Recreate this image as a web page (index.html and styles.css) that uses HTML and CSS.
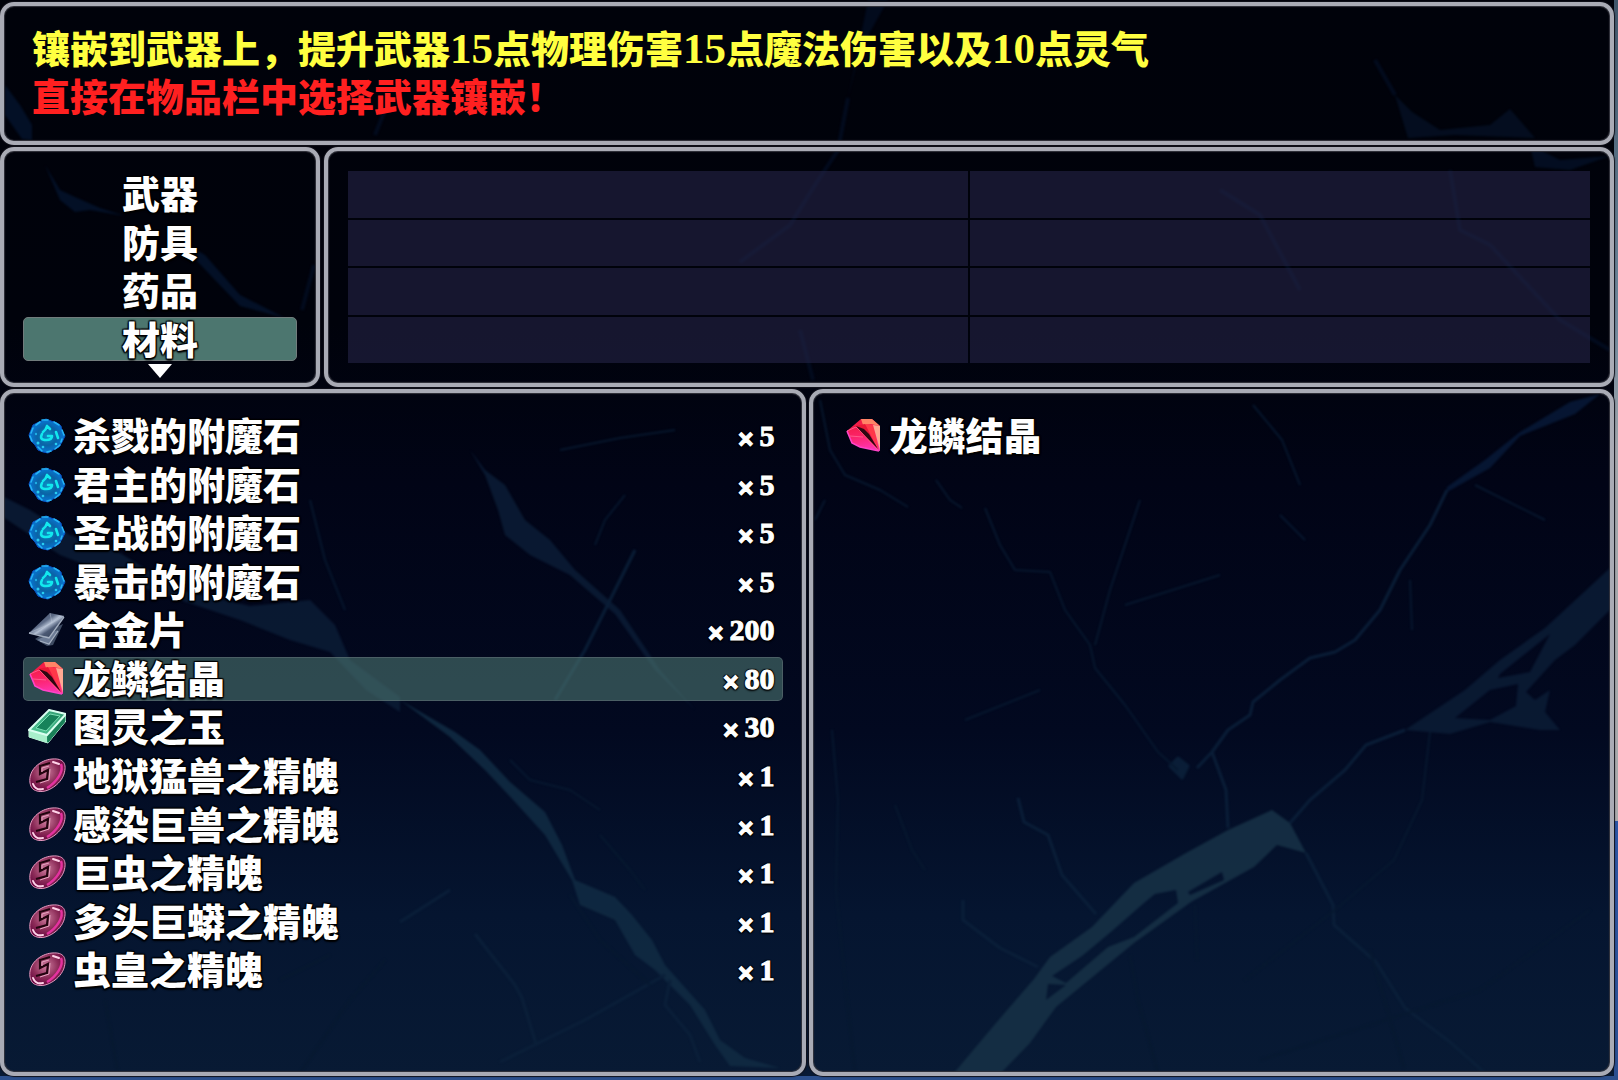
FILE: index.html
```html
<!DOCTYPE html>
<html lang="zh-CN">
<head>
<meta charset="utf-8">
<meta name="viewport" content="width=device-width, initial-scale=1">
<title>物品栏</title>
<link rel="stylesheet" href="styles.css">
</head>
<body>
<svg class="sprites" aria-hidden="true">
  <defs>
    <radialGradient id="g-stone"><stop offset="0" stop-color="#0b8fc4"/><stop offset=".55" stop-color="#0a63a6"/><stop offset="1" stop-color="#0878d8"/></radialGradient>
    <linearGradient id="g-metal" x1="0" y1="0" x2="1" y2="1"><stop offset="0" stop-color="#35425c"/><stop offset=".4" stop-color="#5d6b86"/><stop offset=".52" stop-color="#b4c0d4"/><stop offset=".65" stop-color="#4b5974"/><stop offset="1" stop-color="#28344a"/></linearGradient>
    <linearGradient id="g-gem" x1=".3" y1="0" x2=".5" y2="1"><stop offset="0" stop-color="#f01a3c"/><stop offset=".5" stop-color="#fb2366"/><stop offset="1" stop-color="#ff35b4"/></linearGradient>
    <linearGradient id="g-jade" x1="1" y1="0" x2="0" y2="1"><stop offset="0" stop-color="#2f9a70"/><stop offset="1" stop-color="#4fc795"/></linearGradient>
    <radialGradient id="g-soul" cx=".45" cy=".4" r=".6"><stop offset="0" stop-color="#cf7c9f"/><stop offset=".6" stop-color="#8c2c58"/><stop offset="1" stop-color="#6a0840"/></radialGradient>
    <symbol id="stone" viewBox="0 0 38 38">
      <path d="M18 2l5 2 6 2 4 3 1 5 3 5-3 6-3 5-6 3-5 3-5-1-5-2-3-5-4-4-2-6 2-5 2-5 6-3z" fill="url(#g-stone)" stroke="#0a4fc0"/>
      <path d="M14 3l6 0M8 8l4-3M3 16l2-5M4 24l-2-5M26 5l5 3M34 13l2 5M32 28l-5 4M10 30l4 4M19 35l4-1M34 22l-1 3" stroke="#25b4f4" stroke-width="1.6" stroke-linecap="round" fill="none"/>
      <path d="M19 9q-1 4-4 6M19 9l3 3M14 17q-3 6 4 6 6 0 6-4l-4 0M28 15l2 6" stroke="#12e8ee" stroke-width="2.6" stroke-linejoin="round" stroke-linecap="round" fill="none"/>
      <circle cx="10" cy="26" r="1.5" fill="#27cdf0"/><circle cx="15" cy="30" r="1.3" fill="#27cdf0"/><circle cx="28" cy="27" r="1.3" fill="#27cdf0"/><circle cx="8" cy="17" r="1.2" fill="#1eaee4"/>
    </symbol>
    <symbol id="alloy" viewBox="0 0 38 38">
      <path d="M7 28l14-9 14-6-10 21-6 1z" fill="#3e4b62"/>
      <path d="M9 29l16-8 5-2-9 15z" fill="#6c7b95"/>
      <path d="M22 2l14 3-14 21L1 22z" fill="url(#g-metal)"/>
      <path d="M22 2l2 10L1 22M24 12L36 5" stroke="#c1cbda" stroke-width="1" opacity=".4" fill="none"/>
      <path d="M1 22l20 5L36 6M12 30l9 3 9-13" stroke="#a4afc0" stroke-width="1.3" fill="none"/>
    </symbol>
    <symbol id="gem" viewBox="0 0 38 38">
      <path d="M16 2l11 0 8 7v25l-20-4-8-4L2 14z" fill="url(#g-gem)"/>
      <path d="M16 2h11l8 7-9-2-8 1z" fill="#ff8466"/>
      <path d="M20 7l8 1 6 25z" fill="#ff3848"/>
      <path d="M28 8l7 1v24z" fill="#ffa892"/>
      <path d="M9 9l11-2 5 10 8 15-12-11z" fill="#e81836"/>
      <path d="M11 9l8 3 5 5 9 15-12-12z" fill="#2e0712"/>
      <path d="M2 14l9-4 22 23M5 19l13 1" stroke="#ff5a8c" stroke-width="1" fill="none"/>
      <path d="M2 14l5 12 8 4 19 4" stroke="#ff44c8" stroke-width="1.6" fill="none"/>
    </symbol>
    <symbol id="jade" viewBox="0 0 38 38">
      <path d="M21 2l17 4v7L20 35 1 29v-7z" fill="#23986a" stroke="#d4fbe8"/>
      <path d="M1 22l18 5v8L1 29z" fill="#a8efcb"/>
      <path d="M19 27L37 6v8L20 35z" fill="#198158"/>
      <path d="M21 2l17 4-19 21-18-5z" fill="url(#g-jade)" stroke="#d9fff0" stroke-width="2"/>
      <path d="M22 6l10 2-14 15-10-3z" fill="#17835a" stroke="#7ce0b4"/>
    </symbol>
    <symbol id="soul" viewBox="0 0 38 38">
      <path d="M2 26C0 13 12 3 24 2s15 5 12 15S19 37 9 34c-4-1-6-3-7-8z" fill="url(#g-soul)" stroke="#e69bc0"/>
      <path d="M33 7c3 7-4 18-14 24" stroke="#e4329f" stroke-width="2.5" fill="none"/>
      <path d="M5 27c2 5 6 6 10 5M25 5l6 2" stroke="#ffd2e8" stroke-width="2" stroke-linecap="round" fill="none"/>
      <path d="M22 6l-10 3 0 8 8-4-1 9-11 3" stroke="#22040f" stroke-width="2.2" fill="none"/>
      <path d="M21 9l-7 2 0 4M22 12l-1 11-9 3" stroke="#e4a6c0" stroke-width="1" fill="none"/>
    </symbol>
  </defs>
</svg>

<div class="game">
  <svg class="marble" viewBox="0 0 1614 1076" preserveAspectRatio="none" aria-hidden="true">
    <g class="veins">
    <g fill="#0a1b34">
      <path d="M0 495L30 510 70 535 120 553 180 590 250 606 310 600 335 625 350 660 400 697 400 712 366 690 330 652 290 640 240 620 150 590 60 555 0 515z"/>
      <path d="M470 450L485 470 505 485 525 520 550 540 575 570 620 610 660 670 695 710 655 670 615 614 570 575 530 555 505 535 498 510 485 475z"/>
      <path d="M1610 568L1570 605 1545 628 1500 660 1465 690 1405 730 1450 734 1490 722 1540 730 1560 730 1545 712 1550 690 1535 700 1526 692 1555 660 1575 645 1610 610zM1500 674L1550 634 1530 672 1498 678zM1455 718L1490 690 1518 684 1516 706 1490 720z" fill-rule="evenodd"/>
      <path d="M1600 394L1575 414 1520 436 1490 468 1447 492 1447 487 1485 460 1520 432 1570 402z" fill="#071836"/>
      <path d="M5 85L20 105 32 125 32 140 22 139 5 115z" fill="#04122a"/>
      <path d="M45 165L60 190 75 197 100 208 125 216 90 210 75 212 60 200zM175 238L205 255 240 295 285 318 240 306 215 280z" fill="#04122a"/>
      <path d="M1395 95L1412 112 1440 130 1490 125 1510 109 1535 138 1455 135 1408 138z" fill="#050f22"/>
      <path d="M1530 145L1560 160 1610 156 1570 170 1535 167z" fill="#040f24"/>
      <path d="M888 0L860 50 848 98 856 60 868 0z" fill="#030c20"/>
    </g>
    <path fill="#102a42" d="M400 700L455 732 480 750 510 782 545 812 562 845 575 880 615 897 632 915 652 940 665 965 705 1010 720 1040 745 1058 780 1068 730 1066 715 1045 690 1005 655 970 635 955 615 920 580 905 572 880 545 835 515 802 485 770 450 737z"/>
    <path fill="#163045" fill-rule="evenodd" d="M954 1073L996 1023 1034 979 1050 957 1092 927 1134 883 1186 853 1228 830 1272 810 1290 823 1306 853 1277 845 1254 867 1191 902 1134 943 1056 1007 1030 1043 1001 1073zM1188 892L1222 872 1224 880 1190 895zM1155 894L1176 890 1178 903 1134 937 1108 947 1066 983 1052 976 1082 956 1112 931 1144 903zM1048 984L1066 985 1046 1000z"/>
    <g fill="none" stroke="#0b203a" stroke-width="3" stroke-linejoin="round">
      <path d="M1447 490L1430 525 1400 570 1380 610 1355 640 1335 652 1310 658 1280 680 1253 702 1250 715 1228 730 1212 752 1197 768"/>
      <path d="M1405 730L1366 745 1345 770 1310 800 1290 823M1306 853L1333 905 1334 925 1376 962 1405 1008 1450 1042 1484 1072"/>
      <path d="M1212 752L1226 790 1228 828M963 900L963 920 1000 948 1038 967M1018 798L1024 822 1048 835 1062 875 1096 914"/>
      <path d="M1178 758l10 8-6 12-12-12z" fill="#0b203a"/>
      <path d="M635 550L615 590 585 650 555 700M400 922L450 890M475 934L515 985 522 998 536 1044M500 1062L585 1020 665 975M670 980L665 1005 690 1035 700 1062"/>
    </g>
    <g fill="none" stroke="#071930" stroke-width="2" stroke-linejoin="round">
      <path d="M1253 405L1282 440 1300 485M985 508L1000 545 1015 570 1050 572 1065 610 1090 645 1095 668 1125 705 1158 752 1178 770M936 480L950 500 962 508M820 400L830 450 845 475 880 490 908 507M825 500L815 520M1095 645L1110 590 1140 500M1125 605L1220 575M965 720L1040 690"/>
      <path d="M832 730L838 800 836 890 845 980 855 1073M895 805L912 850 925 870M1430 732L1422 800 1394 860 1335 910 1245 980M1590 910L1480 990 1260 1060M1130 955L1138 1000 1158 1073M1370 950L1404 1068M1195 905L1197 960"/>
      <path d="M560 450L620 438 675 430M625 495L605 520 595 545M510 760L530 780 570 790 600 810M600 835L630 870 645 890M570 895L600 940 650 985M310 500L325 560 345 610M105 1000L118 1073M300 1073L350 1000 385 960M280 980L330 955M1410 580L1412 630M1475 485L1545 520M1280 515L1305 540"/>
    </g>
    <g fill="none" stroke="#030c20" stroke-width="4">
      <path d="M848 98L838 150 815 185 790 225 740 262M800 330L813 380M385 110L375 135M314 265L302 310M1375 60L1395 95M1220 190L1260 215 1300 290M1450 170L1460 230 1490 245 1560 320 1610 350"/>
    </g>
    </g>
  </svg>

  <header class="panel hint">
    <p class="bonus">镶嵌到武器上，提升武器<span class="num">15</span>点物理伤害<span class="num">15</span>点魔法伤害以及<span class="num">10</span>点灵气</p>
    <p class="usage">直接在物品栏中选择武器镶嵌！</p>
  </header>

  <div class="middle">
    <nav class="panel categories" aria-label="分类">
      <button type="button">武器</button>
      <button type="button">防具</button>
      <button type="button">药品</button>
      <button type="button" class="selected" aria-current="true">材料</button>
      <svg class="more" viewBox="0 0 24 14" aria-hidden="true"><path d="M0 0h24L12 14z" fill="#fff"/></svg>
    </nav>
    <section class="panel slots" aria-label="属性">
      <div></div><div></div><div></div><div></div><div></div><div></div><div></div><div></div>
    </section>
  </div>

  <main class="bottom">
    <ul class="panel items">
      <li><button type="button"><svg class="icon"><use href="#stone"/></svg><span class="name">杀戮的附魔石</span><span class="count"><i>×</i>5</span></button></li>
      <li><button type="button"><svg class="icon"><use href="#stone"/></svg><span class="name">君主的附魔石</span><span class="count"><i>×</i>5</span></button></li>
      <li><button type="button"><svg class="icon"><use href="#stone"/></svg><span class="name">圣战的附魔石</span><span class="count"><i>×</i>5</span></button></li>
      <li><button type="button"><svg class="icon"><use href="#stone"/></svg><span class="name">暴击的附魔石</span><span class="count"><i>×</i>5</span></button></li>
      <li><button type="button"><svg class="icon"><use href="#alloy"/></svg><span class="name">合金片</span><span class="count"><i>×</i>200</span></button></li>
      <li><button type="button" class="selected" aria-current="true"><svg class="icon"><use href="#gem"/></svg><span class="name">龙鳞结晶</span><span class="count"><i>×</i>80</span></button></li>
      <li><button type="button"><svg class="icon"><use href="#jade"/></svg><span class="name">图灵之玉</span><span class="count"><i>×</i>30</span></button></li>
      <li><button type="button"><svg class="icon"><use href="#soul"/></svg><span class="name">地狱猛兽之精魄</span><span class="count"><i>×</i>1</span></button></li>
      <li><button type="button"><svg class="icon"><use href="#soul"/></svg><span class="name">感染巨兽之精魄</span><span class="count"><i>×</i>1</span></button></li>
      <li><button type="button"><svg class="icon"><use href="#soul"/></svg><span class="name">巨虫之精魄</span><span class="count"><i>×</i>1</span></button></li>
      <li><button type="button"><svg class="icon"><use href="#soul"/></svg><span class="name">多头巨蟒之精魄</span><span class="count"><i>×</i>1</span></button></li>
      <li><button type="button"><svg class="icon"><use href="#soul"/></svg><span class="name">虫皇之精魄</span><span class="count"><i>×</i>1</span></button></li>
    </ul>
    <section class="panel detail">
      <h1><svg class="icon"><use href="#gem"/></svg><span class="name">龙鳞结晶</span></h1>
    </section>
  </main>
</div>
</body>
</html>
```
FILE: styles.css
```css
* {
  box-sizing: border-box;
  margin: 0;
  padding: 0;
}

body {
  font-family: "Noto Sans CJK SC", sans-serif;
  font-size: 38px;
  font-weight: 900;
  line-height: 48px;
  color: #fff;
  background: linear-gradient(#40566a 0%, #70889c 30%, #a2a6ac 42%, #aaaaac 76%, #2c55a4 76%, #2b4f90 100%);
}

button {
  font: inherit;
  color: inherit;
  background: none;
  border: 1px solid transparent;
  border-radius: 5px;
  cursor: pointer;
}

ul {
  list-style: none;
}

.sprites {
  position: absolute;
  width: 0;
  height: 0;
}

.game {
  position: relative;
  display: flex;
  flex-direction: column;
  gap: 2px;
  min-height: 100vh;
  padding: 2px 4px 4px 0;
  background: linear-gradient(#2b4f8c, #2b4f8c) left bottom / 100% 4px no-repeat;
}

.marble {
  position: absolute;
  top: 0;
  left: 0;
  z-index: -1;
  width: calc(100% - 4px);
  height: calc(100% - 4px);
  background: linear-gradient(#00020a 0%, #00020b 30%, #010416 45%, #020920 68%, #051530 85%, #081a34 100%);
}

.veins {
  filter: blur(1px);
  opacity: 0.9;
}

.panel {
  border: 4px solid #a9abb5;
  border-radius: 14px;
  box-shadow: inset 0 0 1px 1px #33353e, 0 0 1px 1px #10111a;
}

.hint {
  min-height: 143px;
  padding: 17px 28px;
}

.bonus {
  color: #ffff40;
}

.usage {
  color: #ff2020;
}

.num {
  font-family: "Liberation Serif", serif;
  font-size: 43px;
  font-weight: 700;
  line-height: 40px;
}

.middle {
  display: grid;
  grid-template-columns: 320px 1fr;
  gap: 4px;
  min-height: 240px;
}

.categories {
  position: relative;
  display: grid;
  grid-auto-rows: 1fr;
  padding: 18px 19px 20px;
}

.categories button {
  margin: 2px 0;
  padding-bottom: 2px;
  line-height: 38px;
  text-align: center;
}

.categories .selected {
  background: #4c766f;
  border-color: #717c7c;
}

.more {
  position: absolute;
  bottom: 5px;
  left: calc(50% - 12px);
  width: 24px;
  height: 14px;
}

.slots {
  display: grid;
  grid-template-columns: 1fr 1fr;
  grid-auto-rows: 1fr;
  gap: 2px;
  padding: 20px;
}

.slots div {
  background: rgba(36, 37, 72, 0.6);
}

.bottom {
  flex: 1;
  display: grid;
  grid-template-columns: 1fr 1fr;
  gap: 3px;
}

.items {
  display: grid;
  grid-template-rows: repeat(13, 1fr);
  padding: 19px 19px 29px;
}

.items li {
  display: flex;
  padding: 2px 0;
}

.items button {
  flex: 1;
  display: flex;
  align-items: center;
  padding: 0 7px 0 4px;
  line-height: 42px;
}

.items .selected {
  background: rgba(76, 118, 114, 0.6);
  border-color: rgba(120, 130, 134, 0.4);
}

.icon {
  flex: none;
  width: 38px;
  height: 38px;
  margin-right: 7px;
}

.name {
  padding-bottom: 4px;
  line-height: 38px;
}

.name,
.count,
.categories button {
  text-shadow: 0 0 2px #000, 1px 1px 1px #000, -1px -1px 1px #000, 1px -1px 1px #000, -1px 1px 1px #000, 0 2px 2px #000;
}

.count {
  display: flex;
  align-items: flex-start;
  gap: 5px;
  height: 42px;
  margin-left: auto;
  font-family: "Liberation Serif", serif;
  font-size: 30px;
  font-weight: 700;
  -webkit-text-stroke: 1px #fff;
}

.count i {
  font-family: "Noto Sans", sans-serif;
  font-style: normal;
  line-height: 48px;
}

.detail {
  padding: 19px 32px;
}

.detail h1 {
  display: flex;
  align-items: center;
  min-height: 48px;
  font-size: 38px;
  font-weight: 900;
}
```
